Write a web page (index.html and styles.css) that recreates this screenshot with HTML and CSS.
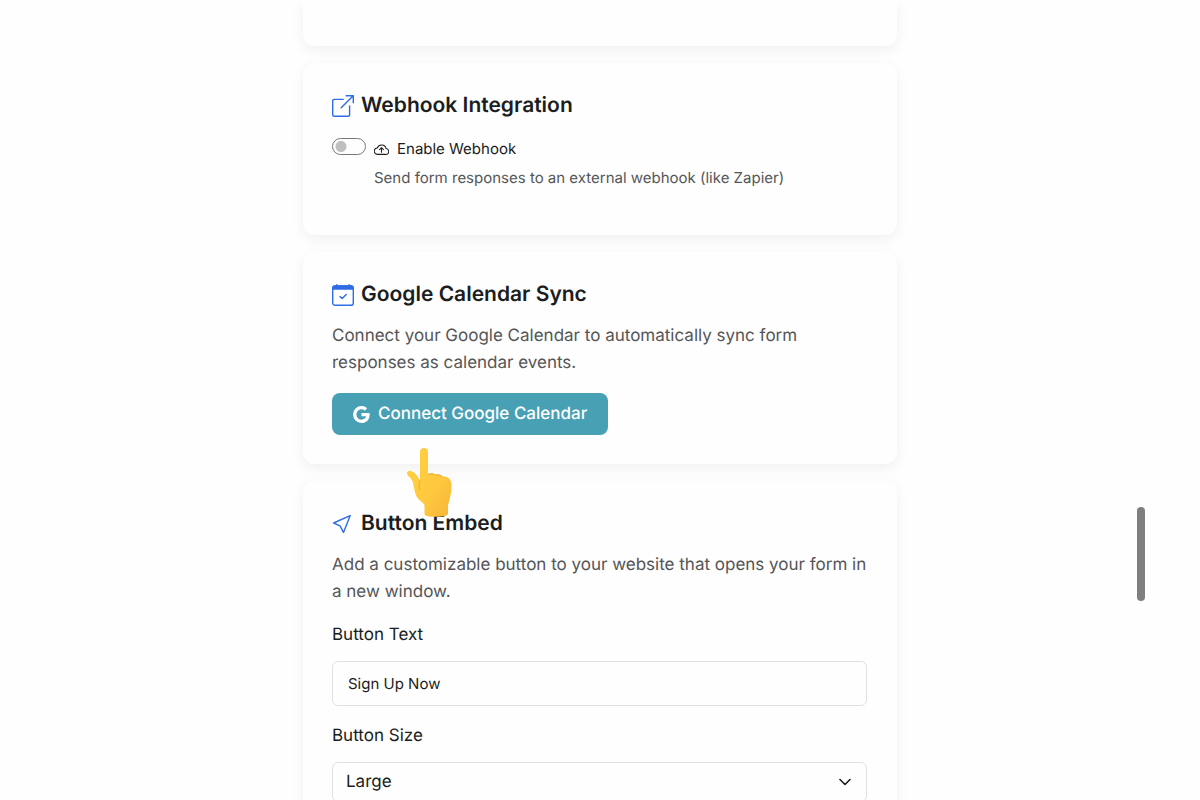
FILE: index.html
```
<!DOCTYPE html>
<html lang="en">
<head>
<meta charset="utf-8">
<meta name="viewport" content="width=device-width, initial-scale=1">
<title>Form Settings</title>
<link rel="stylesheet" href="styles.css">
</head>

<body>
<main class="settings">

 <section class="card card-top"></section>

 <section class="card card-webhook">
  <h2 class="card-title">
   <svg class="icon" viewBox="0 0 22 22" fill="none" stroke="currentColor" stroke-width="1.4" stroke-linecap="round" stroke-linejoin="round">
    <path d="M11.2 4.4H2.2A1.5 1.5 0 0 0 .7 5.9V19.8a1.5 1.5 0 0 0 1.5 1.5H16.1a1.5 1.5 0 0 0 1.5-1.5V11"/>
    <path d="M14.2 .7H21.3V7.8M21 1L9.2 12.8"/>
   </svg>
   Webhook Integration
  </h2>
  <div class="option">
   <input type="checkbox" role="switch" class="switch" id="webhook">
   <div>
    <label class="option-label" for="webhook">
     <svg class="icon-cloud" viewBox="0 0 16 16" fill="none" stroke="currentColor" stroke-width="1.1" stroke-linecap="round" stroke-linejoin="round">
      <path d="M3.900 13.200H12.300a3.100 3.100 0 0 0 .600-6.200 4.900 4.900 0 0 0-9.400-.600A3.400 3.400 0 0 0 3.900 13.200z"/>
      <path d="M8 11V6.200M5.900 8.200L8 6.100l2.100 2.100"/>
     </svg>
     Enable Webhook
    </label>
    <p class="option-help">Send form responses to an external webhook (like Zapier)</p>
   </div>
  </div>
 </section>

 <section class="card">
  <h2 class="card-title">
   <svg class="icon" viewBox="0 0 22 22" fill="none" stroke="currentColor" stroke-width="1.4" stroke-linecap="round" stroke-linejoin="round">
    <rect x=".7" y="2" width="20.6" height="19.3" rx="2.4"/>
    <path d="M1 5V4a2 2 0 0 1 2-2h16a2 2 0 0 1 2 2v1z" fill="currentColor"/>
    <path d="M4.800 .7V2M17.200 .7V2M8 12.400l2.200 2.200 4-4"/>
   </svg>
   Google Calendar Sync
  </h2>
  <p class="card-text">Connect your Google Calendar to automatically sync form responses as calendar events.</p>
  <div class="action">
   <button type="button" class="btn">
    <svg class="icon-google" viewBox="0 0 16 16" fill="currentColor">
     <path d="M15.545 6.558a9.4 9.4 0 0 1 .139 1.626c0 2.434-.87 4.492-2.384 5.885h.002C11.978 15.292 10.158 16 8 16A8 8 0 1 1 8 0a7.7 7.7 0 0 1 5.352 2.082l-2.284 2.284A4.35 4.35 0 0 0 8 3.166c-2.087 0-3.86 1.408-4.492 3.304a4.8 4.8 0 0 0 0 3.063h.003c.635 1.893 2.405 3.301 4.492 3.301 1.078 0 2.004-.276 2.722-.764h-.003a3.7 3.7 0 0 0 1.599-2.431H8v-3.08z"/>
    </svg>
    Connect Google Calendar
   </button>
   <svg class="pointer" viewBox="0 0 46 70">
    <defs>
     <linearGradient id="skin" x1="0" y1="0" x2="1" y2="1">
      <stop offset="0" stop-color="#ffd140"/>
      <stop offset=".6" stop-color="#ffc83f"/>
      <stop offset="1" stop-color="#f6b538"/>
     </linearGradient>
    </defs>
    <path fill="url(#skin)" d="M14 5C14 2.500 15.500 1 18 1s4 1.500 4 4.200V27c2-1.400 5.500-1.200 7.500.800 2.200-1 5.500-.300 7.200 1.800 4.300-.700 8.300 1.800 8.700 7.400.300 6-.700 11-2 16-.5 2.500-1.400 4-1.400 6.500v7c0 2-4 3.300-11.500 3.300S18.500 69 18.500 67V58c-1.500-2.500-6-5-8.200-9C8 44.500 8.200 38 6.200 33.500 4.800 30.500 1 29 1 26.300c0-2 2-2.900 4-2.300 4.700 1.500 6.800 5.700 9 9.800z"/>
    <path fill="none" stroke="#e59b2d" stroke-width=".7" stroke-linecap="round" d="M14 33.500c-.9 3-1.100 6-.5 9M22 27.500c2-1 5-1 7 .5 2-.6 5-.2 7.200 1.700"/>
   </svg>
  </div>
 </section>

 <section class="card">
  <h2 class="card-title">
   <svg class="icon" viewBox="0 0 22 22" fill="none" stroke="currentColor" stroke-width="1.4" stroke-linejoin="round">
    <path d="M18.200 2.600L11.500 19.400 8 12.800 1.600 10z"/>
   </svg>
   Button Embed
  </h2>
  <p class="card-text">Add a customizable button to your website that opens your form in a new window.</p>
  <div class="field">
   <label for="button-text">Button Text</label>
   <input type="text" class="control" id="button-text" value="Sign Up Now">
  </div>
  <div class="field">
   <label for="button-size">Button Size</label>
   <div class="select-wrap">
    <select class="control" id="button-size">
     <option>Small</option>
     <option>Medium</option>
     <option selected>Large</option>
    </select>
    <svg class="chevron" viewBox="0 0 12 8" fill="none" stroke="currentColor" stroke-width="1.6" stroke-linecap="round" stroke-linejoin="round">
     <path d="M1 1.500l5 5 5-5"/>
    </svg>
   </div>
  </div>
 </section>

</main>

<div class="scroll-thumb"></div>
</body>

</html>
```
FILE: styles.css
```
*{
    box-sizing:border-box;
}

body{
    margin:0;
    height:100vh;
    overflow-y:auto;
    scrollbar-width:none;
    background:#fefefe;
    color:#1b1d20;
    font-family:Inter, "Liberation Sans", sans-serif;
    font-size:17px;
    line-height:27px;
    text-rendering:geometricPrecision;
}

h2, p{
    margin:0;
}

.settings{
    display:flex;
    flex-direction:column;
    gap:17px;
    max-width:594px;
    margin:0 auto;
    padding-bottom:40px;
}

.card{
    padding:30px 30px 29px 29px;
    border-radius:12px;
    background:#fefefe;
    box-shadow:0 4px 14px rgba(0,0,0,0.06);
}

.card-top{
    padding:16px 30px 30px;
    border-radius:0 0 12px 12px;
}

.card-webhook{
    padding-bottom:44px;
}

.card-title{
    display:flex;
    align-items:center;
    gap:7px;
    margin-bottom:15px;
    font-size:21px;
    font-weight:600;
    line-height:26px;
}

.icon{
    flex:none;
    width:22px;
    height:22px;
    color:#2f6ce5;
}

.card-text{
    margin-bottom:16px;
    color:#555658;
}

/* webhook switch */
.option{
    display:flex;
    gap:8px;
    font-size:15px;
}

.switch{
    appearance:none;
    flex:none;
    width:34px;
    height:17px;
    margin:4px 0 0;
    border:1px solid #777;
    border-radius:9px;
    background:radial-gradient(circle at 8px 50%, #bfbfbf 5px, transparent 6px);
}

.switch:checked{
    border-color:#48a0b4;
    background:radial-gradient(circle at 24px 50%, #fff 5px, #48a0b4 6px);
}

.option-label{
    display:flex;
    align-items:center;
    gap:8px;
    line-height:30px;
}

.icon-cloud{
    width:15px;
    height:15px;
}

.option-help{
    color:#555658;
}

/* calendar button */
.action{
    position:relative;
}

.btn{
    display:inline-flex;
    align-items:center;
    gap:8px;
    height:42px;
    padding:0 21px;
    border:0;
    border-radius:8px;
    background:#48a0b4;
    color:#fff;
    font:500 17px Inter, "Liberation Sans", sans-serif;
    text-rendering:inherit;
    vertical-align:top;
    cursor:pointer;
}

.icon-google{
    width:17px;
    height:17px;
}

.pointer{
    position:absolute;
    top:54px;
    left:74px;
    z-index:1;
    width:46px;
    height:70px;
    pointer-events:none;
}

/* embed form */
.field{
    display:flex;
    flex-direction:column;
    gap:12px;
    margin-bottom:17px;
}

.control{
    width:100%;
    height:45px;
    padding:0 15px;
    border:1px solid #dfe0e2;
    border-radius:6px;
    background:#fefefe;
    color:#1b1d20;
    font:15px Inter, "Liberation Sans", sans-serif;
    text-rendering:inherit;
}

.select-wrap{
    position:relative;
}

select.control{
    appearance:none;
    height:40px;
    padding:0 13px;
    font-size:17px;
}

.chevron{
    position:absolute;
    top:16px;
    right:16px;
    width:12px;
    height:8px;
    pointer-events:none;
}

.scroll-thumb{
    position:fixed;
    top:507px;
    right:55px;
    width:8px;
    height:94px;
    border-radius:4px;
    background:#7f7f7f;
}
```
